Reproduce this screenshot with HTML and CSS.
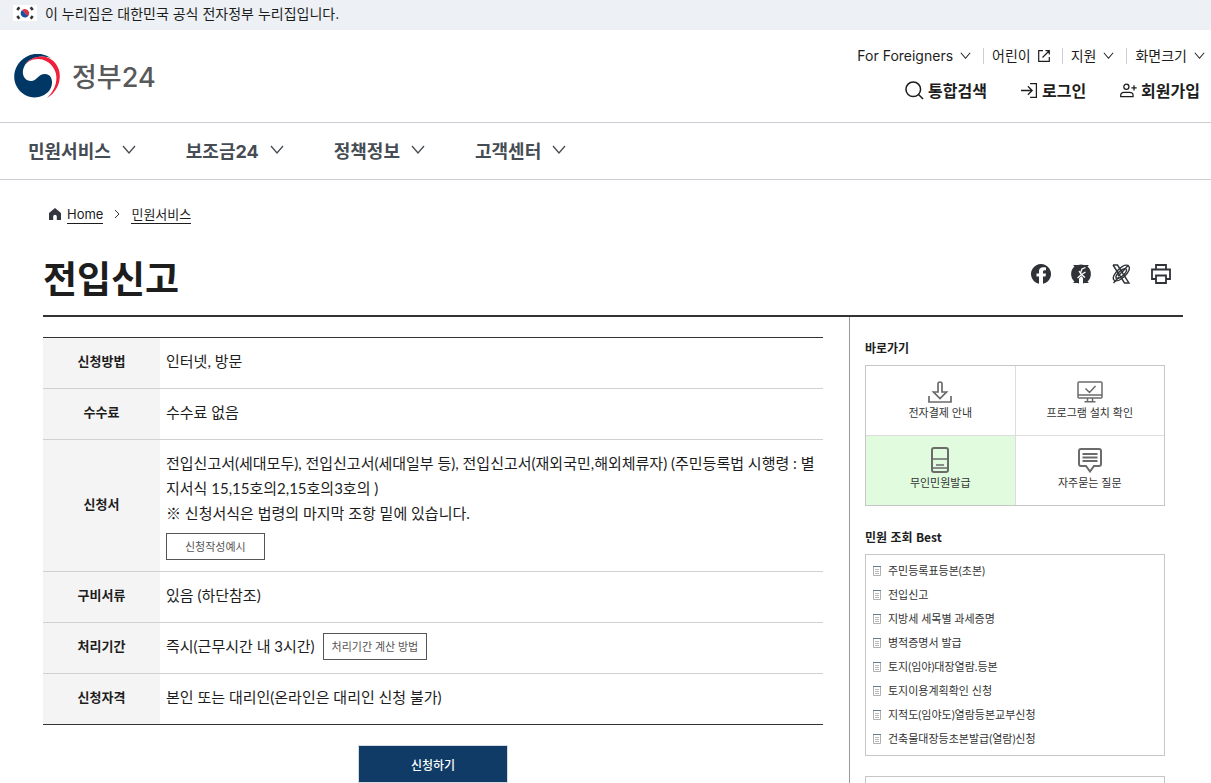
FILE: index.html
```html
<!DOCTYPE html>
<html lang="ko">
<head>
  <meta charset="UTF-8">
  <title>전입신고 | 정부24</title>
  <meta name="viewport" content="width=device-width, initial-scale=1.0">
  <link rel="stylesheet" href="styles.css">
</head>
<body>
  <!-- shared icons -->
  <svg class="sprite" aria-hidden="true">
    <symbol id="chevron" viewBox="0 0 14 9"><path d="M1 1l6 7 6-7" fill="none" stroke="currentColor" stroke-width="1.3"/></symbol>
    <symbol id="doc" viewBox="0 0 8 10">
      <path d="M.5 0v9.500h7V0" fill="none" stroke="#b0b0b0"/>
      <path d="M0 .5h8" stroke="#5f7d96"/>
      <path d="M2 3.500h4M2 5.500h4M2 7.500h4" stroke="#b8b8b8"/>
    </symbol>
  </svg>

  <div class="gov-bar">
    <svg class="flag" viewBox="0 0 24 16" aria-hidden="true">
      <rect width="24" height="16" fill="#fff"/>
      <path d="M8.500 5.800a4.200 4.200 0 0 1 7 4.600C14.400 12 13 10 12 8.100S9.200 5 8.500 5.800z" fill="#d8313f"/>
      <path d="M8.500 5.800a4.200 4.200 0 1 0 7 4.600C14.400 11 13 10 12 8.100S9.200 5 8.500 5.800z" fill="#1b4da0"/>
      <g stroke="#333" stroke-width="2.600">
        <path d="M4.300 5l2-2.800M17.700 2.200l2 2.800M4.300 11l2 2.800M17.700 13.800l2-2.800"/>
      </g>
    </svg>
    <span>이 누리집은 대한민국 공식 전자정부 누리집입니다.</span>
  </div>

  <header class="header">
    <a class="logo" href="#">
      <svg class="logo-mark" viewBox="0 0 46 44" aria-hidden="true">
        <path d="M38 5C31-1 20-2 12 3 1 9-3 23 3 33c7 12 23 14 32 4 5-6 4-17-4-17-7 0-8 7-14 7-7 0-10-8-7-14C14 3 29 0 38 5z" fill="#003764"/>
        <path d="M9 14C14 3 29-1 38 6c12 9 10 29-5 38 9-8 12-21 7-29C33 2 15 2 9 14z" fill="#f0203c"/>
      </svg>
      <span>정부24</span>
    </a>
    <div class="header-menus">
      <ul class="util">
        <li><button type="button">For Foreigners <svg class="chev"><use href="#chevron"/></svg></button></li>
        <li><a href="#">어린이
          <svg class="ext" viewBox="0 0 12 12"><path d="M5 .7H.7v10.600h10.600V7M7.500.7h3.800v3.800M11 1L4.500 7.500" fill="none" stroke="currentColor" stroke-width="1.200"/></svg></a></li>
        <li><button type="button">지원 <svg class="chev"><use href="#chevron"/></svg></button></li>
        <li><button type="button">화면크기 <svg class="chev"><use href="#chevron"/></svg></button></li>
      </ul>
      <ul class="member">
        <li><a href="#">
          <svg class="icon-search" viewBox="0 0 20 20"><circle cx="8.700" cy="8.700" r="7.700" fill="none" stroke="currentColor" stroke-width="1.600"/><path d="M14 14l5 5" stroke="currentColor" stroke-width="1.600"/></svg>통합검색</a></li>
        <li><a href="#">
          <svg class="icon-member" viewBox="0 0 16 16"><path d="M8.500 1.500h6v13h-6M0 8h10M6.500 4L10.500 8l-4 4" fill="none" stroke="currentColor" stroke-width="1.200"/></svg>로그인</a></li>
        <li><a href="#">
          <svg class="icon-member" viewBox="0 0 16 16"><g fill="none" stroke="currentColor" stroke-width="1.200"><circle cx="6" cy="4.500" r="2.400"/><path d="M.7 13.800h11.600v-1.300c0-1.500-1.500-2.700-3.300-2.700H4c-1.800 0-3.300 1.200-3.300 2.700zM13.200 3v5M10.700 5.500h5"/></g></svg>회원가입</a></li>
      </ul>
    </div>
  </header>

  <nav class="gnb">
    <button type="button">민원서비스 <svg class="chev-lg"><use href="#chevron"/></svg></button>
    <button type="button">보조금24 <svg class="chev-lg"><use href="#chevron"/></svg></button>
    <button type="button">정책정보 <svg class="chev-lg"><use href="#chevron"/></svg></button>
    <button type="button">고객센터 <svg class="chev-lg"><use href="#chevron"/></svg></button>
  </nav>

  <main class="main">
    <div class="breadcrumb">
      <svg class="icon-home" viewBox="0 0 12 12"><path d="M6 0l6 5v7H7.800V8.500a1.800 1.800 0 0 0-3.600 0V12H0V5z" fill="#33363d"/></svg>
      <a href="#">Home</a>
      <svg class="crumb-arrow" viewBox="0 0 6 8"><path d="M1 0l4 4-4 4" fill="none" stroke="#33363d"/></svg>
      <a href="#">민원서비스</a>
    </div>

    <div class="title-row">
      <h1>전입신고</h1>
      <div class="share">
        <button type="button" aria-label="페이스북"><svg viewBox="0 0 20 20"><path d="M8 19.800A10 10 0 1 1 12 19.800V12.500h2.500l.5-3h-3V8c0-1.200.5-1.800 1.800-1.800H15V3.500c-3.600-.8-7-.2-7 4v2H5.500v3H8z" fill="#2f3338"/></svg></button>
        <button type="button" aria-label="카카오스토리"><svg viewBox="0 0 20 20"><path d="M8 19.800L7 19H2l1.500-1.500a10 10 0 0 1 0-15L2 1h5a10 10 0 0 1 6 0h5l-1.500 1.500a10 10 0 0 1 0 15L18 19h-5l-1 .8V14l-1.500-2L8 14.500z" fill="#2f3338"/><path d="M14.500 3.500l-3.500 1.500-1.500 4M8 7l2 3 4 3.500M14.500 8l-4 2.500-4 3.500" stroke="#fff" stroke-width="1.300" fill="none"/></svg></button>
        <button type="button" aria-label="X"><svg viewBox="0 0 20 20"><g fill="none" stroke="#2f3338" stroke-width="1.400"><path d="M2 1h4.500l11.500 18h-4.500L2 1M17.500 1L12 7M8 13l-5.500 6"/><path d="M3 16C-1 12 13-2 17.500 2S8 20 3 16z"/><path d="M5 14C4 11 12 3 15 5s-6 11-10 9zM7 12l6-6"/></g></svg></button>
        <button type="button" aria-label="인쇄"><svg viewBox="0 0 20 20"><g fill="none" stroke="#2f3338" stroke-width="1.800"><path d="M5 5.500V1h10v4.500M5 15H1V5.500h18V15h-4"/><path d="M5 11.500h10V19H5z"/></g></svg></button>
      </div>
    </div>

    <div class="columns">
      <section class="content">
        <table class="info">
          <tbody>
            <tr><th scope="row">신청방법</th><td>인터넷, 방문</td></tr>
            <tr><th scope="row">수수료</th><td>수수료 없음</td></tr>
            <tr>
              <th scope="row">신청서</th>
              <td class="forms">전입신고서(세대모두), 전입신고서(세대일부 등), 전입신고서(재외국민,해외체류자) (주민등록법 시행령 : 별지서식 15,15호의2,15호의3호의 )<br>
                ※ 신청서식은 법령의 마지막 조항 밑에 있습니다.
                <button type="button" class="btn-line btn-block">신청작성예시</button>
              </td>
            </tr>
            <tr><th scope="row">구비서류</th><td>있음 (하단참조)</td></tr>
            <tr>
              <th scope="row">처리기간</th>
              <td><div class="period">즉시(근무시간 내 3시간) <button type="button" class="btn-line">처리기간 계산 방법</button></div></td>
            </tr>
            <tr><th scope="row">신청자격</th><td>본인 또는 대리인(온라인은 대리인 신청 불가)</td></tr>
          </tbody>
        </table>
        <button type="button" class="btn-apply">신청하기</button>
      </section>

      <aside class="side">
        <h2>바로가기</h2>
        <div class="quick">
          <a href="#"><svg width="24" height="22" viewBox="0 0 24 22"><path d="M1 15v6h22v-6M10 11V3a2 2 0 0 1 4 0v8h4.500L12 17.500 5.500 11z" fill="none" stroke="#6b6b6b" stroke-width="1.700"/></svg>전자결제 안내</a>
          <a href="#"><svg width="26" height="22" viewBox="0 0 26 22"><path d="M2 1h22q1 0 1 1v14q0 1-1 1H2q-1 0-1-1V2q0-1 1-1zM1 14h24M10.500 17v3M15.500 17v3M7.500 20.800h11M8.500 7.500l4 4 6-6.500" fill="none" stroke="#6b6b6b" stroke-width="1.500"/></svg>프로그램 설치 확인</a>
          <a href="#" class="on"><svg width="18" height="26" viewBox="0 0 18 26"><rect x="1" y="1" width="16" height="24" rx="2" fill="none" stroke="#6b6b6b" stroke-width="2"/><path d="M1 12h16M1 21h16M5 18h8" stroke="#6b6b6b" stroke-width="1.500"/></svg>무인민원발급</a>
          <a href="#"><svg width="24" height="25" viewBox="0 0 24 25"><path d="M3 1h18q2 0 2 2v13q0 2-2 2h-5l-4 5.500L8 18H3q-2 0-2-2V3q0-2 2-2zM4.500 6h15M4.500 9.500h15M4.500 13h15" fill="none" stroke="#6b6b6b" stroke-width="2"/></svg>자주묻는 질문</a>
        </div>

        <h2>민원 조회 Best</h2>
        <ul class="best">
          <li><svg><use href="#doc"/></svg><a href="#">주민등록표등본(초본)</a></li>
          <li><svg><use href="#doc"/></svg><a href="#">전입신고</a></li>
          <li><svg><use href="#doc"/></svg><a href="#">지방세 세목별 과세증명</a></li>
          <li><svg><use href="#doc"/></svg><a href="#">병적증명서 발급</a></li>
          <li><svg><use href="#doc"/></svg><a href="#">토지(임야)대장열람.등본</a></li>
          <li><svg><use href="#doc"/></svg><a href="#">토지이용계획확인 신청</a></li>
          <li><svg><use href="#doc"/></svg><a href="#">지적도(임야도)열람등본교부신청</a></li>
          <li><svg><use href="#doc"/></svg><a href="#">건축물대장등초본발급(열람)신청</a></li>
        </ul>

        <div class="side-box"></div>
      </aside>
    </div>
  </main>
</body>
</html>
```

FILE: styles.css
```css
* {
  box-sizing: border-box;
  margin: 0;
  padding: 0;
}

body {
  display: flex;
  flex-direction: column;
  min-height: 100vh;
  background: #fff;
  color: #1d1d1d;
  font-family: Inter, "Noto Sans CJK KR", sans-serif;
  font-size: 15px;
}

a {
  color: inherit;
  text-decoration: none;
}

ul {
  list-style: none;
}

button {
  border: 0;
  background: none;
  color: inherit;
  font: inherit;
  cursor: pointer;
}

.sprite {
  display: none;
}

/* top notice */
.gov-bar {
  display: flex;
  align-items: center;
  gap: 8px;
  height: 30px;
  padding: 0 13px 4px;
  background: #edf1f5;
  font-size: 14px;
}

.flag {
  width: 24px;
  height: 16px;
}

/* header */
.header {
  display: flex;
  justify-content: space-between;
  align-items: center;
  height: 93px;
  padding: 0 6px 0 14px;
  border-bottom: 1px solid #cdced4;
}

.logo {
  display: flex;
  align-items: center;
  gap: 12px;
  color: #58595b;
  font-size: 27px;
  font-weight: 500;
  line-height: 32px;
}

.logo span {
  padding-top: 4px;
}

.logo-mark {
  width: 46px;
  height: 44px;
}

.util,
.member {
  display: flex;
  justify-content: flex-end;
  line-height: 24px;
}

.header-menus {
  display: flex;
  flex-direction: column;
  gap: 11px;
  padding-bottom: 6px;
}

.util {
  font-size: 14px;
}

.util li + li {
  margin-left: 12px;
  padding-left: 9px;
  background: linear-gradient(#cdced4, #cdced4) left center / 1px 16px no-repeat;
}

.util a,
.util button,
.member a,
.gnb button {
  display: flex;
  align-items: center;
}

.util a,
.util button {
  gap: 7px;
}

.chev {
  width: 11px;
  height: 7px;
}

.ext {
  width: 12px;
  height: 12px;
}

.member {
  gap: 34px;
  padding-right: 5px;
  font-size: 16px;
  font-weight: 700;
}

.member a {
  gap: 4px;
}

.icon-search {
  width: 19px;
  height: 19px;
}

.icon-member {
  width: 17px;
  height: 17px;
}

.gnb {
  display: flex;
  gap: 50px;
  height: 57px;
  padding: 0 28px 3px;
  border-bottom: 1px solid #cdced4;
  color: #464c53;
  font-size: 18px;
  font-weight: 700;
}

.gnb button {
  gap: 11px;
}

.chev-lg {
  width: 14px;
  height: 9px;
}

/* page */
.main {
  display: flex;
  flex-direction: column;
  flex: 1;
  padding: 24px 28px 0 43px;
}

.breadcrumb {
  display: flex;
  align-items: center;
  gap: 6px;
  height: 20px;
  padding-left: 6px;
  font-size: 13px;
  line-height: 18px;
}

.breadcrumb a {
  border-bottom: 1px solid #1d1d1d;
}

.icon-home {
  width: 12px;
  height: 12px;
}

.crumb-arrow {
  width: 6px;
  height: 8px;
  margin: 0 5px;
}

.title-row {
  display: flex;
  justify-content: space-between;
  align-items: center;
  height: 93px;
  padding-right: 12px;
  border-bottom: 2px solid #333;
}

h1 {
  font-size: 37px;
  font-weight: 700;
  line-height: 48px;
  padding-top: 20px;
}

.share {
  display: flex;
  gap: 20px;
  padding-top: 8px;
}

.share button,
.share svg {
  display: block;
  width: 20px;
  height: 20px;
}

.columns {
  display: flex;
  flex: 1;
  font-family: Lato, "Noto Sans CJK KR", sans-serif;
}

.content {
  flex: 1;
  padding: 20px 26px 0 0;
}

.info {
  width: 100%;
  border-collapse: collapse;
  border-top: 1px solid #333;
  border-bottom: 1px solid #333;
}

.info th,
.info td {
  padding: 11px 0 14px;
  border-bottom: 1px solid #d0d0d0;
  line-height: 25px;
}

.info tr:last-child > * {
  border-bottom: 0;
}

.info th {
  width: 117px;
  background: #f4f4f4;
  font-size: 13px;
  font-weight: 700;
}

.info td {
  padding-left: 6px;
  word-break: break-all;
}

.info .forms {
  padding-bottom: 11px;
}

.period {
  display: flex;
  align-items: center;
  gap: 8px;
  height: 25px;
}

.btn-line {
  height: 27px;
  padding: 0 8px;
  border: 1px solid #555;
  color: #555;
  font-size: 11px;
  line-height: 22px;
}

.btn-block {
  display: block;
  margin-top: 7px;
  padding: 0 18px;
}

.btn-apply {
  display: block;
  width: 150px;
  height: 38px;
  margin: 20px auto 0;
  border: 1px solid #d5dae0;
  background: #0f3b66;
  color: #fff;
  font-size: 12px;
  font-weight: 500;
}

/* right column */
.side {
  display: flex;
  flex-direction: column;
  width: 334px;
  padding: 21px 18px 0 15px;
  border-left: 1px solid #999;
  font-size: 11px;
}

.side h2 {
  margin-bottom: 7px;
  font-family: "Noto Sans CJK KR", sans-serif;
  font-size: 12px;
  font-weight: 700;
  line-height: 20px;
}

.quick {
  display: grid;
  grid-template-columns: 1fr 1fr;
  gap: 1px;
  margin-bottom: 21px;
  border: 1px solid #c6c6c6;
  background: #ddd;
}

.quick a {
  display: flex;
  flex-direction: column;
  align-items: center;
  justify-content: flex-end;
  gap: 1px;
  height: 69px;
  padding-bottom: 13px;
  background: #fff;
  color: #333;
  line-height: 18px;
}

.quick .on {
  background: #e1fbdf;
}

.best {
  padding: 4px 7px;
  border: 1px solid #c6c6c6;
  color: #333;
  line-height: 24px;
}

.best li {
  display: flex;
  align-items: center;
  gap: 7px;
  height: 24px;
}

.best svg {
  width: 8px;
  height: 10px;
}

.side-box {
  flex: 1;
  min-height: 7px;
  margin-top: 20px;
  border: 1px solid #c6c6c6;
  border-bottom: 0;
}
```
